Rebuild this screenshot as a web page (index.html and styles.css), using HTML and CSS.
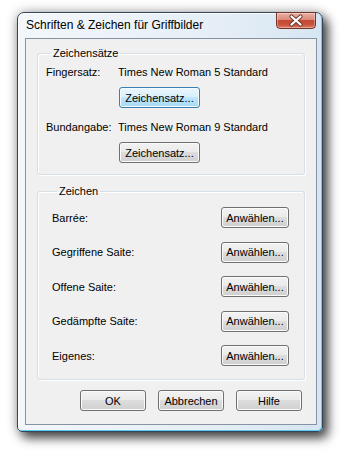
FILE: index.html
```html
<!DOCTYPE html>
<html lang="de">
<head>
    <meta charset="UTF-8">
    <title>Schriften &amp; Zeichen für Griffbilder</title>
    <link rel="stylesheet" href="styles.css">
</head>
<body>
    <div class="window">
        <div class="titlebar">
            <span class="title">Schriften &amp; Zeichen für Griffbilder</span>
            <button class="close-btn" title="Schließen">
                <svg width="40" height="17" viewBox="0 0 40 17">
                    <path d="M15.5 4.5 L24.5 12.5 M24.5 4.5 L15.5 12.5" stroke="#6a3a32" stroke-width="4.2" stroke-linecap="round" fill="none"/>
                    <path d="M15.5 4.5 L24.5 12.5 M24.5 4.5 L15.5 12.5" stroke="#ffffff" stroke-width="2.2" stroke-linecap="round" fill="none"/>
                </svg>
            </button>
        </div>

        <div class="client">
            <fieldset class="group group-fonts">
                <legend>Zeichensätze</legend>
                <div class="font-row">
                    <span class="font-label">Fingersatz:</span>
                    <span>Times New Roman 5 Standard</span>
                </div>
                <button class="btn btn-focus font-btn">Zeichensatz...</button>
                <div class="font-row font-row-second">
                    <span class="font-label">Bundangabe:</span>
                    <span>Times New Roman 9 Standard</span>
                </div>
                <button class="btn font-btn">Zeichensatz...</button>
            </fieldset>

            <fieldset class="group group-signs">
                <legend>Zeichen</legend>
                <div class="sign-row">
                    <span>Barrée:</span>
                    <button class="btn sign-btn">Anwählen...</button>
                </div>
                <div class="sign-row">
                    <span>Gegriffene Saite:</span>
                    <button class="btn sign-btn">Anwählen...</button>
                </div>
                <div class="sign-row">
                    <span>Offene Saite:</span>
                    <button class="btn sign-btn">Anwählen...</button>
                </div>
                <div class="sign-row">
                    <span>Gedämpfte Saite:</span>
                    <button class="btn sign-btn">Anwählen...</button>
                </div>
                <div class="sign-row">
                    <span>Eigenes:</span>
                    <button class="btn sign-btn">Anwählen...</button>
                </div>
            </fieldset>

            <div class="dialog-buttons">
                <button class="btn dialog-btn">OK</button>
                <button class="btn dialog-btn">Abbrechen</button>
                <button class="btn dialog-btn">Hilfe</button>
            </div>
        </div>
    </div>
</body>
</html>
```

FILE: styles.css
```css
html {
    background: #fff;
}
body {
    margin: 0;
    padding: 12px 0 0 17px;
    min-height: 456px;
    box-sizing: border-box;
    background: #fff;
    font-family: "Liberation Sans", Arial, sans-serif;
    font-size: 11px;
    color: #000;
}
.window {
    width: 306px;
    height: 420px;
    box-sizing: border-box;
    padding: 0 5px 6px 7px;
    border: 1px solid #34465a;
    border-radius: 7px 7px 5px 5px;
    background: linear-gradient(to right, #f3f7fb, #e4edf6 70%, #d6e5f3);
    box-shadow: inset 1px 1px 0 rgba(255, 255, 255, 0.9),
                inset -1px -1px 0 #5ccdf1,
                5px 6px 11px rgba(0, 0, 0, 0.7),
                0 0 12px rgba(0, 0, 0, 0.3);
}
.titlebar {
    display: flex;
    justify-content: space-between;
    align-items: flex-start;
    height: 25px;
}
.title {
    padding: 4px 0 0 1px;
    font-size: 12px;
    line-height: 16px;
    color: #000;
}
.close-btn {
    margin: -1px 1px 0 0;
    width: 40px;
    height: 17px;
    padding: 0;
    border: 1px solid #6f352b;
    border-radius: 0 0 4px 4px;
    background: linear-gradient(#eab0a4 0%, #dc8a7a 45%, #c44a35 50%, #c8503b 75%, #dc7a66 100%);
    box-shadow: inset 0 0 0 1px rgba(255, 255, 255, 0.35);
    display: block;
}
.close-btn svg {
    display: block;
    margin: -1px 0 0 -1px;
}
.client {
    height: 387px;
    box-sizing: border-box;
    padding: 7px 11px 0;
    background: #f0f0f0;
    border: 1px solid #8593a2;
}
.group {
    margin: 0;
    padding: 0;
    min-width: 0;
    border: 1px solid #d5dfe5;
    border-radius: 3px;
    box-shadow: inset 1px 1px 0 #fff, 1px 1px 0 #fff;
}
.group legend {
    margin-left: 5px;
    padding: 0 2px;
    line-height: 14px;
}
.group-fonts {
    padding: 5px 0 11px 8px;
}
.font-row {
    display: flex;
    line-height: 14px;
}
.font-row-second {
    margin-top: 12px;
}
.font-label {
    width: 72px;
}
.btn {
    height: 21px;
    padding: 0;
    font-family: "Liberation Sans", Arial, sans-serif;
    font-size: 11px;
    color: #000;
    border: 1px solid #707070;
    border-radius: 3px;
    background: linear-gradient(#f2f2f2 0%, #ebebeb 45%, #dddddd 50%, #cfcfcf 100%);
    box-shadow: inset 0 0 0 1px #fbfbfb;
}
.btn-focus {
    border-color: #3c7fb1;
    background: linear-gradient(#eaf6fd 0%, #d9f0fc 45%, #bee6fd 50%, #a7d9f5 100%);
    box-shadow: inset 0 0 0 1px #f4fbff;
}
.font-btn {
    display: block;
    width: 81px;
    margin: 8px 0 0 73px;
}
.group-signs {
    margin-top: 9px;
    padding: 9px 15px 13px 14px;
    display: flex;
    flex-direction: column;
    gap: 13.5px;
}
.sign-row {
    display: flex;
    justify-content: space-between;
    align-items: center;
}
.sign-btn {
    width: 68px;
}
.dialog-buttons {
    display: flex;
    justify-content: flex-end;
    gap: 12px;
    margin-top: 10px;
    padding-right: 3px;
}
.dialog-btn {
    width: 66px;
}
```
